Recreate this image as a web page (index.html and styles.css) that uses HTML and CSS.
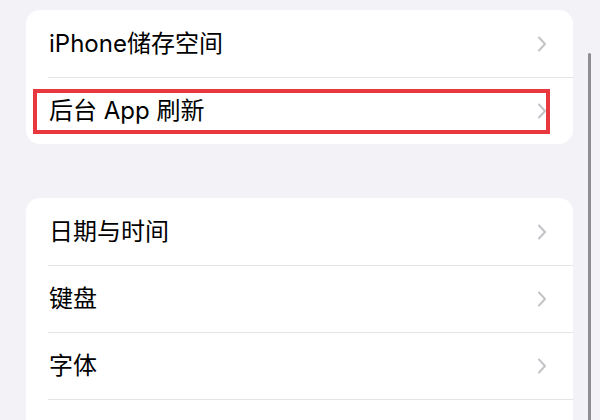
FILE: index.html
```html
<!DOCTYPE html>
<html lang="zh-CN">
<head>
<meta charset="utf-8">
<link rel="stylesheet" href="styles.css">
</head>
<body>
<div class="page">
  <div class="card">
    <div class="row">
      <span class="label">iPhone储存空间</span>
      <svg class="chev" viewBox="0 0 10 16" width="10" height="16"><path d="M2 1.5 L8 8 L2 14.5" fill="none" stroke="#c4c4c8" stroke-width="2" stroke-linecap="round" stroke-linejoin="round"/></svg>
    </div>
    <div class="row">
      <span class="label">后台 App 刷新</span>
      <svg class="chev" viewBox="0 0 10 16" width="10" height="16"><path d="M2 1.5 L8 8 L2 14.5" fill="none" stroke="#c4c4c8" stroke-width="2" stroke-linecap="round" stroke-linejoin="round"/></svg>
      <div class="highlight"></div>
    </div>
  </div>
  <div class="card card2">
    <div class="row">
      <span class="label">日期与时间</span>
      <svg class="chev" viewBox="0 0 10 16" width="10" height="16"><path d="M2 1.5 L8 8 L2 14.5" fill="none" stroke="#c4c4c8" stroke-width="2" stroke-linecap="round" stroke-linejoin="round"/></svg>
    </div>
    <div class="row">
      <span class="label">键盘</span>
      <svg class="chev" viewBox="0 0 10 16" width="10" height="16"><path d="M2 1.5 L8 8 L2 14.5" fill="none" stroke="#c4c4c8" stroke-width="2" stroke-linecap="round" stroke-linejoin="round"/></svg>
    </div>
    <div class="row">
      <span class="label">字体</span>
      <svg class="chev" viewBox="0 0 10 16" width="10" height="16"><path d="M2 1.5 L8 8 L2 14.5" fill="none" stroke="#c4c4c8" stroke-width="2" stroke-linecap="round" stroke-linejoin="round"/></svg>
    </div>
    <div class="row">
      <span class="label"></span>
    </div>
  </div>
  <div class="scrollbar"></div>
</div>
</body>
</html>
```
FILE: styles.css
```css
html, body {
  margin: 0;
  padding: 0;
  background: #f2f2f7;
}
.page {
  position: relative;
  width: 600px;
  height: 420px;
  overflow: hidden;
  padding-top: 10px;
  box-sizing: border-box;
  font-family: Inter, "Noto Sans CJK SC", sans-serif;
  color: #000;
}
.card {
  margin-left: 26px;
  width: 547px;
  background: #fff;
  border-radius: 14px;
}
.card2 {
  margin-top: 54px;
  border-radius: 14px 14px 0 0;
}
.row {
  position: relative;
  height: 67px;
  display: flex;
  align-items: center;
  justify-content: space-between;
  padding: 0 26px 0 23px;
  box-sizing: border-box;
}
.row + .row::before {
  content: "";
  position: absolute;
  top: 0;
  left: 22px;
  right: 0;
  height: 1px;
  background: #e3e3e8;
}
.label {
  font-size: 24px;
  line-height: 1;
}
.chev {
  display: block;
}
.highlight {
  position: absolute;
  left: 7px;
  right: 23px;
  top: 12px;
  bottom: 10px;
  border: 4px solid #e8383d;
}
.scrollbar {
  position: absolute;
  left: 588px;
  top: 53px;
  width: 3px;
  bottom: -10px;
  border-radius: 2px;
  background: #8e8e93;
}
```
